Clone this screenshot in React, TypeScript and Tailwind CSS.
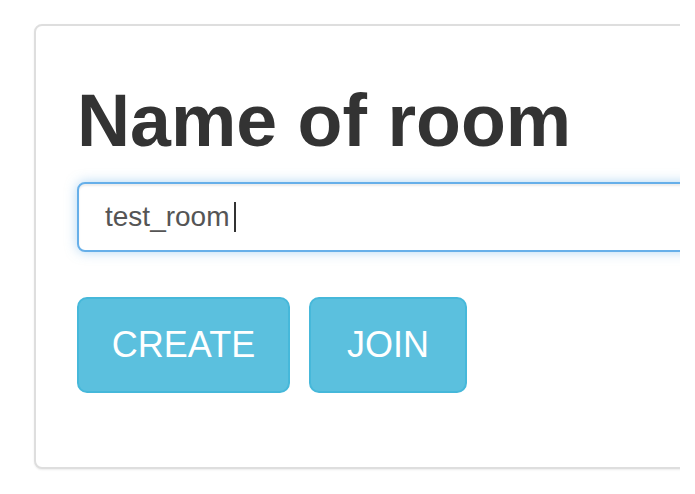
export default function App() {
  return (
    <div className="h-[494px] w-[695px] overflow-hidden bg-white [font-family:'Liberation_Sans',Arial,sans-serif]">
      <div className="w-[680px] overflow-hidden pl-[34px] pt-[24px] pb-[4px]">
        <div className="w-[720px] rounded-[8px] border-2 border-[#dedede] bg-white pl-[41px] pt-[55px] pb-[74px] shadow-[0_1px_2px_rgba(0,0,0,0.08)]">
          <h1 className="text-[73.5px] font-bold leading-[79px] text-[#333]">Name of room</h1>
          <div className="mt-[22px] flex h-[70px] items-center rounded-[8px] border-2 border-[#66afe9] bg-white pl-[26px] text-[28px] text-[#555] shadow-[inset_0_2px_2px_rgba(0,0,0,0.075),0_0_12px_rgba(102,175,233,0.5)]">
            <span>test_room</span>
            <span className="ml-[4px] h-[30px] w-[2px] bg-[#333]" />
          </div>
          <div className="mt-[45px] flex gap-[19px]">
            <button className="flex h-[96px] w-[213px] items-center justify-center rounded-[10px] border-2 border-[#46b8da] bg-[#5bc0de] text-[36px] text-white">
              CREATE
            </button>
            <button className="flex h-[96px] w-[158px] items-center justify-center rounded-[10px] border-2 border-[#46b8da] bg-[#5bc0de] text-[36px] text-white">
              JOIN
            </button>
          </div>
        </div>
      </div>
    </div>
  )
}
